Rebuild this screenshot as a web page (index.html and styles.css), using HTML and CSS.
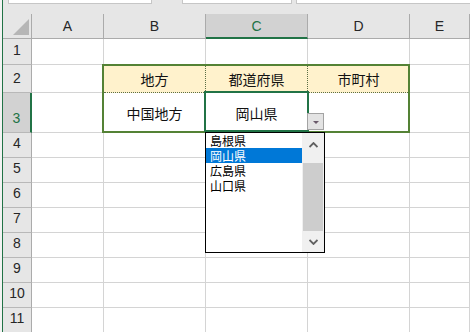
FILE: index.html
```html
<!DOCTYPE html>
<html lang="ja">
<head>
    <meta charset="UTF-8">
    <title>入力規則リスト</title>
    <link rel="stylesheet" href="styles.css">
</head>
<body>

<div class="edge"></div>

<div class="app">
    <div class="toolbar">
        <div class="box name-box"></div>
        <div class="box fx-box"></div>
        <div class="box formula"></div>
    </div>

    <div class="sheet-wrap">
        <div class="sheet">
            <!-- 列見出し -->
            <div class="hd corner"><span class="tri"></span></div>
            <div class="hd col">A</div>
            <div class="hd col">B</div>
            <div class="hd col sel-col">C</div>
            <div class="hd col">D</div>
            <div class="hd col">E</div>

            <div class="hd row">1</div>
            <div class="c"></div><div class="c"></div><div class="c"></div><div class="c"></div><div class="c"></div>

            <div class="hd row">2</div>
            <div class="c"></div>
            <div class="c th">地方</div>
            <div class="c th">都道府県</div>
            <div class="c th">市町村</div>
            <div class="c"></div>

            <div class="hd row sel-row">3</div>
            <div class="c"></div>
            <div class="c">中国地方</div>
            <div class="c">岡山県</div>
            <div class="c"></div>
            <div class="c"></div>

            <div class="hd row">4</div>
            <div class="c"></div><div class="c"></div><div class="c"></div><div class="c"></div><div class="c"></div>
            <div class="hd row">5</div>
            <div class="c"></div><div class="c"></div><div class="c"></div><div class="c"></div><div class="c"></div>
            <div class="hd row">6</div>
            <div class="c"></div><div class="c"></div><div class="c"></div><div class="c"></div><div class="c"></div>
            <div class="hd row">7</div>
            <div class="c"></div><div class="c"></div><div class="c"></div><div class="c"></div><div class="c"></div>
            <div class="hd row">8</div>
            <div class="c"></div><div class="c"></div><div class="c"></div><div class="c"></div><div class="c"></div>
            <div class="hd row">9</div>
            <div class="c"></div><div class="c"></div><div class="c"></div><div class="c"></div><div class="c"></div>
            <div class="hd row">10</div>
            <div class="c"></div><div class="c"></div><div class="c"></div><div class="c"></div><div class="c"></div>
            <div class="hd row">11</div>
            <div class="c"></div><div class="c"></div><div class="c"></div><div class="c"></div><div class="c"></div>
        </div>

        <!-- テーブル枠・アクティブセル・リスト（セルの上に重ねる） -->
        <div class="overlay">
            <div class="table-frame"></div>
            <div class="active-cell"></div>
            <div class="dd-button"><span class="dd-arrow"></span></div>

            <div class="dd-list">
                <div class="items">
                    <div class="item">島根県</div>
                    <div class="item picked">岡山県</div>
                    <div class="item">広島県</div>
                    <div class="item">山口県</div>
                </div>
                <div class="scrollbar">
                    <div class="sb-btn sb-up">
                        <svg width="9" height="6" viewBox="0 0 9 6"><polyline points="0.5,5 4.5,1 8.5,5" fill="none" stroke="#606060" stroke-width="1.8"/></svg>
                    </div>
                    <div class="sb-thumb"></div>
                    <div class="sb-btn sb-down">
                        <svg width="9" height="6" viewBox="0 0 9 6"><polyline points="0.5,1 4.5,5 8.5,1" fill="none" stroke="#606060" stroke-width="1.8"/></svg>
                    </div>
                </div>
            </div>
        </div>
    </div>
</div>

</body>
</html>
```

FILE: styles.css
```css
body {
    margin: 0;
    display: flex;
    height: 332px;
    overflow: hidden;
    background-color: #fff;
    font-family: "Liberation Sans", Arial, sans-serif;
}
.edge {
    width: 2px;
    flex-shrink: 0;
    background-color: #f3f3f3;
    border-right: 1px solid #217346;
}
.app {
    flex: 1;
    display: flex;
    flex-direction: column;
}

/* 数式バー */
.toolbar {
    height: 14px;
    flex-shrink: 0;
    display: flex;
    align-items: flex-start;
    background-color: #e6e6e6;
}
.box {
    height: 3px;
    background-color: #fff;
    border: 1px solid #c6c6c6;
    border-top: none;
}
.name-box {
    width: 142px;
    margin-left: 5px;
}
.fx-box {
    width: 108px;
    margin-left: 30px;
}
.formula {
    flex: 1;
    margin-left: 4px;
    border-right: none;
}

/* シート */
.sheet-wrap {
    position: relative;
}
.sheet,
.overlay {
    display: grid;
    grid-template-columns: 29px 72px 102px 102px 102px 1fr;
    grid-template-rows: 25px 26px 28px 40px repeat(8, 25px);
}
.overlay {
    position: absolute;
    inset: 0;
    pointer-events: none;
}
.c {
    border-right: 1px solid #d4d4d4;
    border-bottom: 1px solid #d4d4d4;
    display: flex;
    align-items: center;
    justify-content: center;
    font-family: "Noto Sans CJK JP", sans-serif;
    font-size: 14px;
    color: #111;
}
.c.th {
    background-color: #fff2cc;
    border-right: 1px dotted #5a6e45;
    border-bottom: 1px dotted #5a6e45;
}
.hd {
    background-color: #e6e6e6;
    border-right: 1px solid #ababab;
    border-bottom: 1px solid #ababab;
    color: #262626;
    font-size: 14px;
    display: flex;
    justify-content: center;
}
.hd.col {
    align-items: center;
}
.hd.corner {
    justify-content: flex-end;
    align-items: flex-end;
    padding: 0 2px 3px 0;
}
.tri {
    width: 0;
    height: 0;
    border-left: 16px solid transparent;
    border-bottom: 16px solid #b6b6b6;
}
.hd.row {
    align-items: flex-end;
    line-height: 14px;
    padding-bottom: 7px;
    border-bottom-color: #b8b8b8;
}
.hd.sel-col {
    background-color: #d2d2d2;
    color: #217346;
    border-bottom: 2px solid #217346;
}
.hd.sel-row {
    background-color: #d2d2d2;
    color: #217346;
    border-right: 2px solid #217346;
}

.table-frame {
    grid-column: 3 / 6;
    grid-row: 3 / 5;
    margin: -1px 0 0 -2px;
    border: 2px solid #548235;
}
.active-cell {
    grid-column: 4;
    grid-row: 4;
    margin: -2px -1px 1px -2px;
    border: 2px solid #217346;
}
.dd-button {
    grid-column: 5;
    grid-row: 4;
    align-self: end;
    justify-self: start;
    box-sizing: border-box;
    width: 17px;
    height: 17px;
    margin: 0 0 3px -1px;
    padding-top: 7px;
    background-color: #e3e3e3;
    border: 1px solid #a3a3a3;
    display: flex;
    justify-content: center;
}
.dd-arrow {
    width: 0;
    height: 0;
    border-left: 3px solid transparent;
    border-right: 3px solid transparent;
    border-top: 3px solid #6a5a6a;
}

.dd-list {
    grid-column: 4 / 6;
    grid-row: 5 / 10;
    align-self: start;
    justify-self: start;
    width: 118px;
    height: 119px;
    margin: -1px 0 0 -1px;
    border: 1px solid #000;
    background-color: #fff;
    display: flex;
}
.items {
    flex: 1;
}
.item {
    height: 15px;
    line-height: 15px;
    padding-left: 4px;
    font-family: "Noto Sans CJK JP", sans-serif;
    font-size: 12px;
    color: #000;
}
.item.picked {
    background-color: #0078d7;
    color: #fff;
}
.scrollbar {
    width: 22px;
    background-color: #f0f0f0;
    display: flex;
    flex-direction: column;
}
.sb-btn {
    display: flex;
    justify-content: center;
}
.sb-up {
    height: 30px;
    padding-top: 9px;
    box-sizing: border-box;
}
.sb-thumb {
    height: 68px;
    margin: 0 1px;
    background-color: #cdcdcd;
}
.sb-down {
    flex: 1;
    align-items: center;
}
```
